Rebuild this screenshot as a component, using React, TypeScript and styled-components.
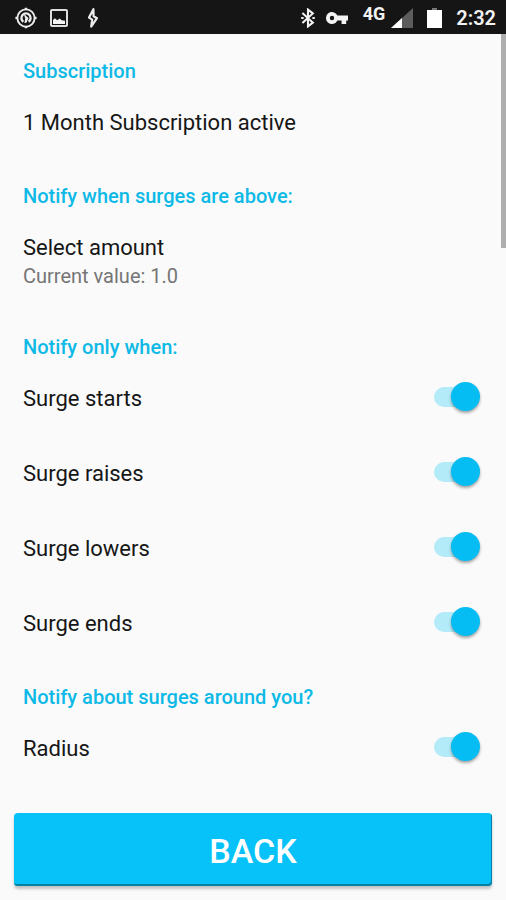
import React, { useState } from "react";
import styled, { createGlobalStyle } from "styled-components";

const GlobalStyle = createGlobalStyle`
  *, *::before, *::after { box-sizing: border-box; }
  body {
    margin: 0;
    background: #fafafa;
    color: #161616;
    font-family: Roboto, "Noto Sans", sans-serif;
  }
`;

const Screen = styled.div`
  display: flex;
  flex-direction: column;
  min-height: 100vh;
`;

const StatusBar = styled.header`
  display: flex;
  align-items: center;
  justify-content: space-between;
  height: 34px;
  padding: 1px 10px 0 15px;
  background: #151515;
  color: #f2f2f2;
`;

const IconGroup = styled.div<{ $gap: number }>`
  display: flex;
  align-items: center;
  gap: ${({ $gap }) => $gap}px;

  svg { display: block; }
`;

const NetworkLabel = styled.span`
  padding-bottom: 8px;
  font-size: 18px;
  line-height: 18px;
  font-weight: 700;
`;

const Clock = styled.time`
  font-size: 20px;
  line-height: 32px;
  font-weight: 600;
`;

const Content = styled.main`
  position: relative;
  flex: 1;
`;

const ScrollThumb = styled.div`
  position: absolute;
  top: 0;
  right: 0;
  width: 5px;
  height: 214px;
  background: #aeaeae;
`;

const SectionTitle = styled.h2`
  margin: 0;
  padding: 24px 23px 0;
  font-size: 20px;
  line-height: 26px;
  font-weight: 500;
  color: #0db9e6;
`;

const Row = styled.div`
  display: flex;
  align-items: flex-start;
  justify-content: space-between;
  min-height: 75px;
  padding: 22px 26px 19px 23px;
  font-size: 22px;
  line-height: 34px;
`;

const ChoiceButton = styled.button`
  display: flex;
  flex-direction: column;
  width: 100%;
  padding: 22px 23px 19px;
  border: 0;
  background: none;
  font: inherit;
  font-size: 22px;
  line-height: 34px;
  color: inherit;
  text-align: left;
  cursor: pointer;
`;

const Summary = styled.span`
  padding-bottom: 4px;
  font-size: 20px;
  line-height: 22px;
  color: #757575;
`;

const ToggleRow = styled(Row).attrs({ as: "label" })`
  cursor: pointer;
`;

const Toggle = styled.input`
  appearance: none;
  display: flex;
  align-items: center;
  justify-content: flex-start;
  position: relative;
  width: 46px;
  height: 29px;
  margin: 0;
  cursor: pointer;

  &::before {
    content: "";
    position: absolute;
    inset: 5px 2px 4px 0;
    border-radius: 10px;
    background: #cfcfcf;
  }

  &::after {
    content: "";
    position: relative;
    width: 29px;
    height: 29px;
    border-radius: 50%;
    background: #f1f1f1;
    box-shadow: 0 2px 3px rgba(0, 0, 0, 0.35);
  }

  &:checked { justify-content: flex-end; }
  &:checked::before { background: #b3ebf8; }
  &:checked::after { background: #06bdf3; }
`;

const Footer = styled.footer`
  display: flex;
  padding: 28px 14px 14px;
`;

const BackButton = styled.button`
  flex: 1;
  height: 73px;
  padding: 2px 0 0;
  border: 0;
  border-radius: 4px;
  background: #06c2f9;
  box-shadow:
    inset -1px -2px 0 #087fa5,
    0 3px 3px rgba(0, 0, 0, 0.22);
  color: #fff;
  font-family: inherit;
  font-size: 34px;
  line-height: 40px;
  font-weight: 500;
  cursor: pointer;
`;

const TargetIcon = () => (
  <svg width="22" height="22" viewBox="0 0 22 22" fill="none" stroke="#ececec" aria-hidden="true">
    <circle cx="11" cy="11" r="8.6" strokeWidth="1.9" />
    <path d="M11 .8v2M11 19.2v2M.4 11h2.4M19.2 11h2.4" strokeWidth="2.6" />
    <path d="M8.4 14.8A4.6 4.6 0 1 1 13.6 14.8" strokeWidth="2.4" />
    <path d="M8.6 6.4l5 4.8-2.2 4.6-2 .2.8-4.4z" fill="#ececec" stroke="none" />
  </svg>
);

const PictureIcon = () => (
  <svg width="18" height="18" viewBox="0 0 18 18" aria-hidden="true">
    <rect x="1" y="1" width="16" height="16" rx="1" fill="none" stroke="#dedede" strokeWidth="2" />
    <path d="M3 15v-4l1.8-1.8 2.4 2 2.6-1.6 1.8 1.6 3.4.6V15z" fill="#f4f4f4" />
  </svg>
);

const BoltIcon = () => (
  <svg width="20" height="20" viewBox="-6 0 20 20" fill="none" stroke="#ececec" strokeWidth="2.2" strokeLinejoin="round" aria-hidden="true">
    <path d="M6.4 1.2L2 9.6l3.2 2L4.2 18.6l5.8-8.4-3.4-2z" />
  </svg>
);

const BluetoothIcon = () => (
  <svg width="14" height="20" viewBox="0 0 14 20" fill="none" stroke="#f2f2f2" strokeWidth="2.1" aria-hidden="true">
    <path d="M1.4 5l10.4 9.6L7 18.4V1.6l4.8 3.8L1.4 15" />
    <path d="M.2 10h2.4M11.4 10h2.4" />
  </svg>
);

const KeyIcon = () => (
  <svg width="24" height="14" viewBox="0 0 24 14" aria-hidden="true">
    <path
      d="M12.4 4.6A6 6 0 1 0 12.4 9.4h4.2V13h4.6V9.4H23V4.6zM7 9.2a2.2 2.2 0 1 1 0-4.4 2.2 2.2 0 0 1 0 4.4z"
      fill="#f4f4f4"
      fillRule="evenodd"
    />
  </svg>
);

const SignalIcon = () => (
  <svg width="22" height="20" viewBox="0 0 22 20" aria-hidden="true">
    <path d="M22 0v20H0z" fill="#5c5c5c" />
    <path d="M11 10v10H0z" fill="#fff" />
  </svg>
);

const BatteryIcon = () => (
  <svg width="15" height="20" viewBox="0 0 15 20" aria-hidden="true">
    <path d="M5 0h5v3H5z" fill="#777" />
    <path d="M0 2h15v18H0z" fill="#fff" />
  </svg>
);

const surgeEvents = ["Surge starts", "Surge raises", "Surge lowers", "Surge ends"];

function ToggleSetting({ label }: { label: string }) {
  const [on, setOn] = useState(true);
  return (
    <ToggleRow>
      {label}
      <Toggle type="checkbox" role="switch" checked={on} onChange={(e) => setOn(e.target.checked)} />
    </ToggleRow>
  );
}

export default function App() {
  return (
    <Screen>
      <GlobalStyle />
      <StatusBar>
        <IconGroup $gap={13}>
          <TargetIcon />
          <PictureIcon />
          <BoltIcon />
        </IconGroup>
        <IconGroup $gap={14}>
          <IconGroup $gap={10}>
            <BluetoothIcon />
            <KeyIcon />
          </IconGroup>
          <IconGroup $gap={6}>
            <NetworkLabel>4G</NetworkLabel>
            <SignalIcon />
          </IconGroup>
          <BatteryIcon />
          <Clock>2:32</Clock>
        </IconGroup>
      </StatusBar>
      <Content>
        <SectionTitle>Subscription</SectionTitle>
        <Row>1 Month Subscription active</Row>
        <SectionTitle>Notify when surges are above:</SectionTitle>
        <ChoiceButton type="button">
          Select amount
          <Summary>Current value: 1.0</Summary>
        </ChoiceButton>
        <SectionTitle>Notify only when:</SectionTitle>
        {surgeEvents.map((label) => (
          <ToggleSetting key={label} label={label} />
        ))}
        <SectionTitle>Notify about surges around you?</SectionTitle>
        <ToggleSetting label="Radius" />
        <ScrollThumb />
      </Content>
      <Footer>
        <BackButton type="button">BACK</BackButton>
      </Footer>
    </Screen>
  );
}
